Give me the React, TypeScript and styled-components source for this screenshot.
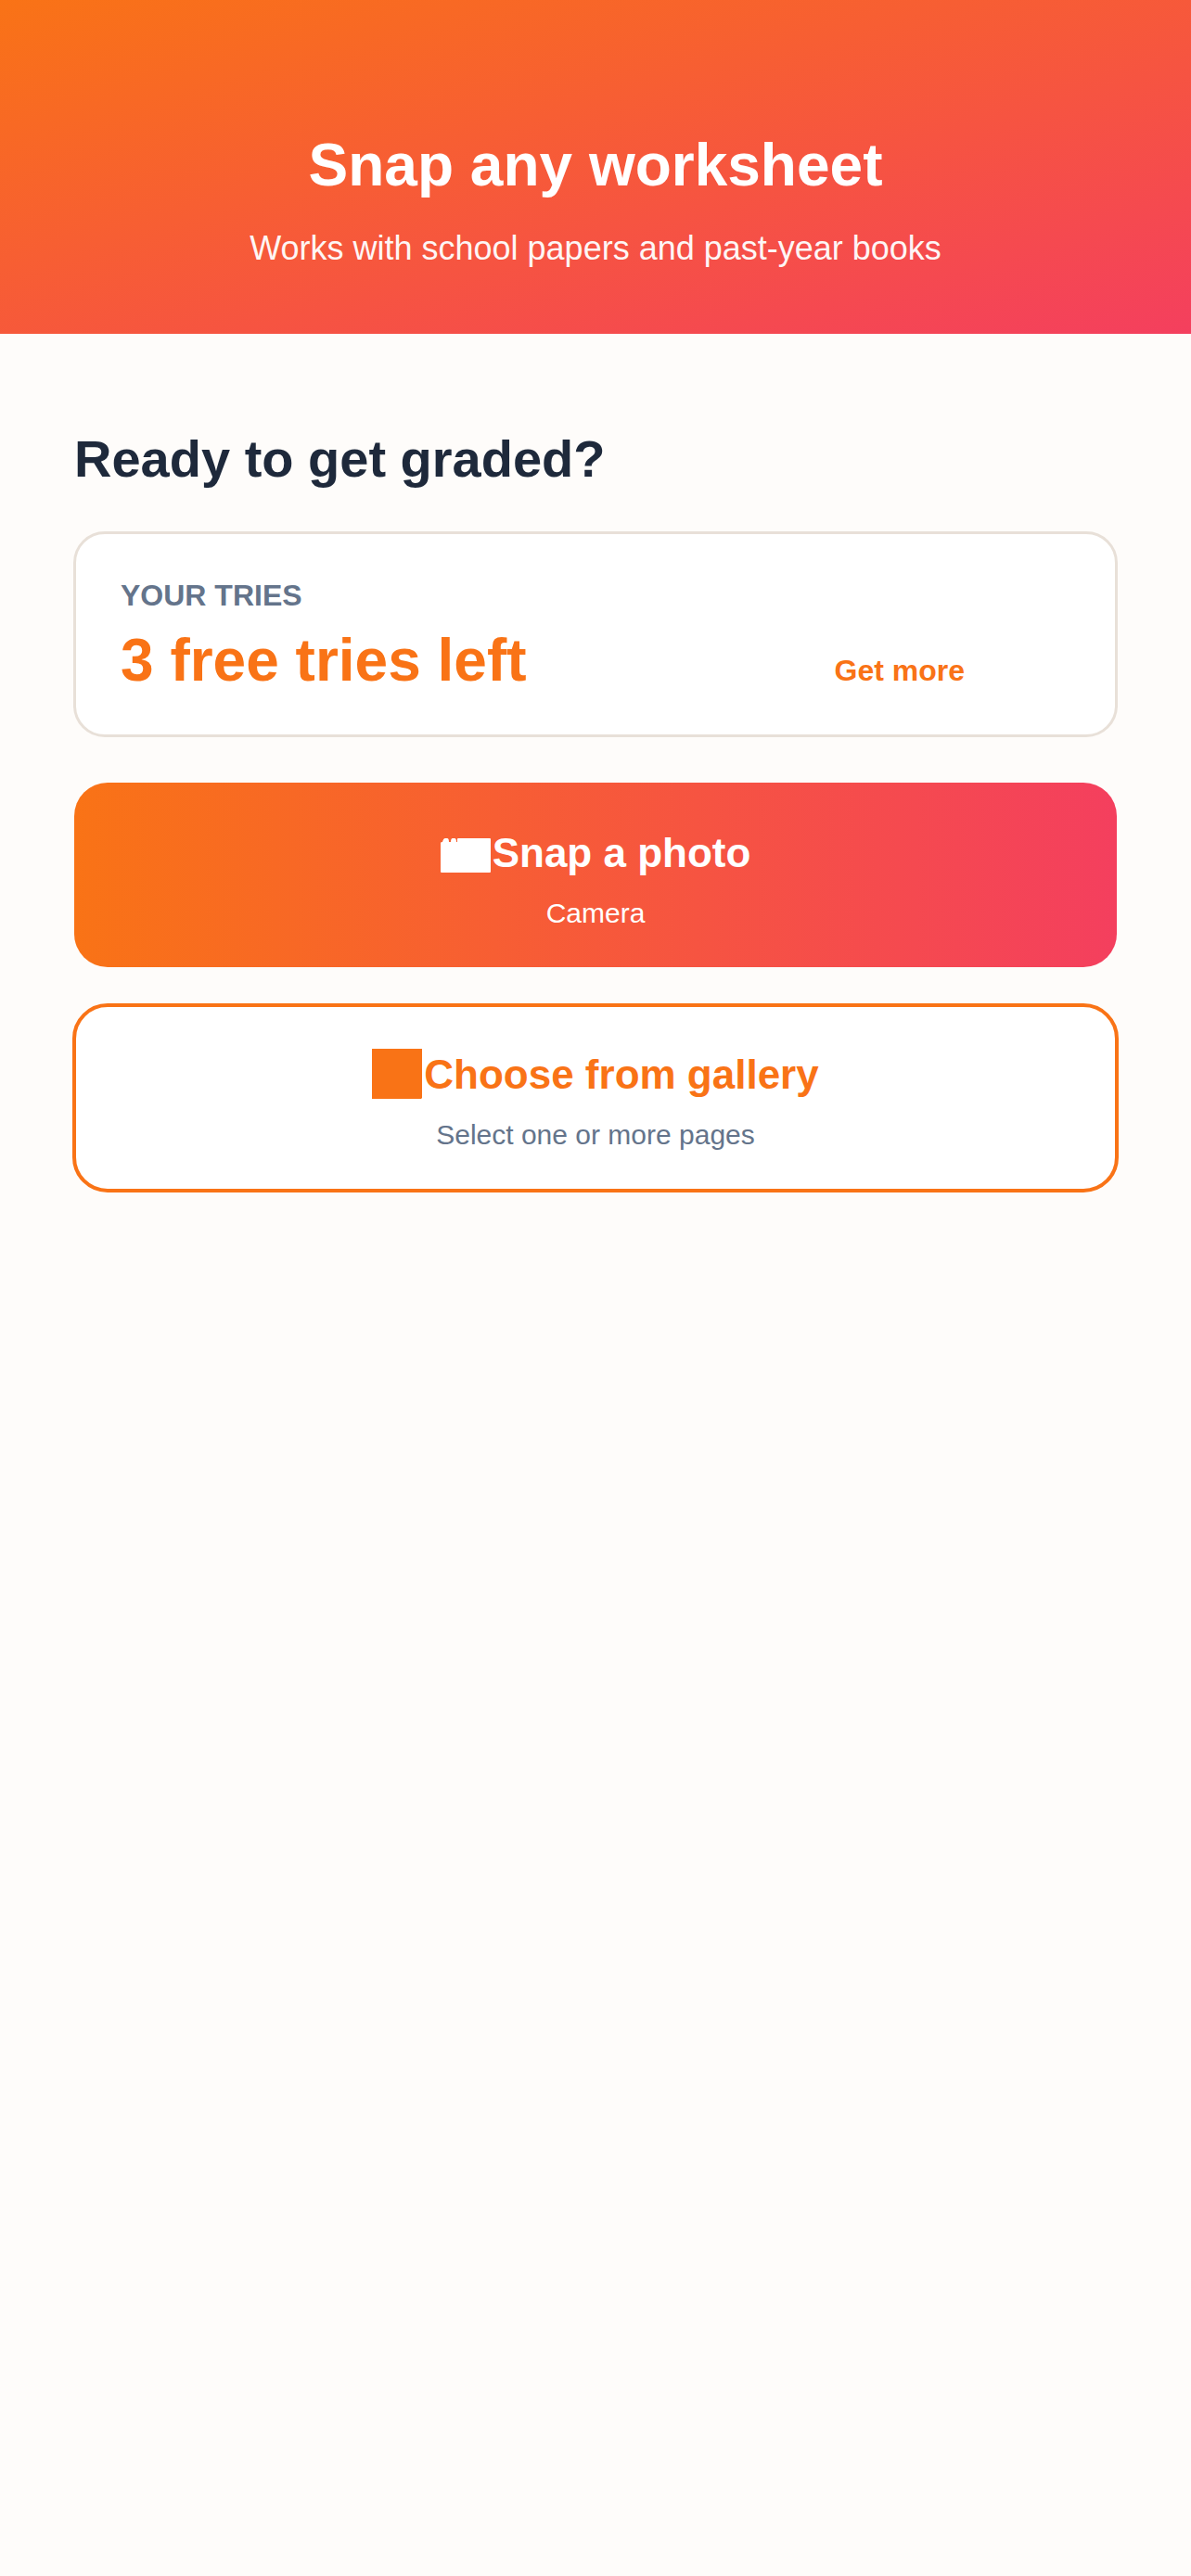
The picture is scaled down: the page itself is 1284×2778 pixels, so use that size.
import styled, { createGlobalStyle } from "styled-components";

const GlobalStyle = createGlobalStyle`
  * {
    box-sizing: border-box;
  }

  body {
    margin: 0;
    background: #fefcfa;
    font-family: "Liberation Sans", Arial, sans-serif;
  }
`;

const Page = styled.div`
  min-height: 2778px;
  background: #fefcfa;
`;

const Hero = styled.header`
  height: 360px;
  padding-top: 140px;
  text-align: center;
  color: #ffffff;
  background: linear-gradient(to bottom right, #f97316, #f43f5e);
`;

const HeroTitle = styled.h1`
  margin: 0;
  font-size: 64px;
  line-height: 76px;
  font-weight: 700;
`;

const HeroText = styled.p`
  margin: 25px 0 0;
  font-size: 36px;
  line-height: 54px;
  opacity: 0.95;
`;

const Main = styled.main`
  display: flex;
  flex-direction: column;
  padding: 95px 80px 0;
`;

const Heading = styled.h2`
  margin: 0 0 38px;
  font-size: 56px;
  line-height: 80px;
  font-weight: 700;
  color: #1e293b;
`;

const TriesCard = styled.section`
  display: flex;
  justify-content: space-between;
  align-items: flex-end;
  height: 222px;
  margin: 0 -1px;
  padding: 47px 162px 42px 48px;
  background: #ffffff;
  border: 3px solid #e8e0d8;
  border-radius: 34px;
`;

const TriesLabel = styled.div`
  font-size: 32px;
  line-height: 38px;
  font-weight: 700;
  color: #64748b;
`;

const TriesCount = styled.div`
  margin-top: 13px;
  font-size: 64px;
  line-height: 76px;
  font-weight: 700;
  color: #f97316;
`;

const MoreLink = styled.a`
  margin-bottom: 8px;
  font-size: 32px;
  line-height: 38px;
  font-weight: 700;
  color: #f97316;
`;

const ActionButton = styled.button<{ $primary?: boolean }>`
  display: flex;
  flex-direction: column;
  align-items: center;
  gap: 17px;
  font-family: inherit;
  height: ${(p) => (p.$primary ? "199px" : "204px")};
  margin: ${(p) => (p.$primary ? "49px 0 0" : "39px -2px 0")};
  padding: ${(p) => (p.$primary ? "49px" : "46px")} 0 0;
  border-radius: ${(p) => (p.$primary ? "36px" : "38px")};
  color: ${(p) => (p.$primary ? "#ffffff" : "#f97316")};
  border: ${(p) => (p.$primary ? "none" : "4px solid #f97316")};
  background: ${(p) =>
    p.$primary ? "linear-gradient(90deg, #f97316, #f43f5e)" : "#ffffff"};
`;

const ActionTitle = styled.span`
  display: flex;
  align-items: center;
  gap: 2px;
  font-size: 44px;
  line-height: 54px;
  font-weight: 700;
`;

const ActionText = styled.span<{ $primary?: boolean }>`
  font-size: 30px;
  line-height: 42px;
  color: ${(p) => (p.$primary ? "#ffffff" : "#64748b")};
`;

const CameraSvg = styled.svg`
  margin-top: 5px;
`;

const GallerySvg = styled.svg`
  margin-top: -2px;
`;

const CameraIcon = () => (
  <CameraSvg width="54" height="37" viewBox="0 0 54 37" fill="#ffffff">
    <path d="M1 37Q0 37 0 36V5Q0 4 2 4Q3 0 5 0H7Q9 0 9 4H11Q11 0 13 0H15Q17 0 17 4H18V1Q18 0 19 0H53Q54 0 54 1V36Q54 37 53 37Z" />
  </CameraSvg>
);

const GalleryIcon = () => (
  <GallerySvg width="54" height="54" viewBox="0 0 54 54" fill="#f97316">
    <path d="M0 0H54V53L53 54H0Z" />
  </GallerySvg>
);

const App = () => {
  return (
    <Page>
      <GlobalStyle />
      <Hero>
        <HeroTitle>Snap any worksheet</HeroTitle>
        <HeroText>Works with school papers and past-year books</HeroText>
      </Hero>
      <Main>
        <Heading>Ready to get graded?</Heading>
        <TriesCard>
          <div>
            <TriesLabel>YOUR TRIES</TriesLabel>
            <TriesCount>3 free tries left</TriesCount>
          </div>
          <MoreLink>Get more</MoreLink>
        </TriesCard>
        <ActionButton $primary>
          <ActionTitle>
            <CameraIcon />
            Snap a photo
          </ActionTitle>
          <ActionText $primary>Camera</ActionText>
        </ActionButton>
        <ActionButton>
          <ActionTitle>
            <GalleryIcon />
            Choose from gallery
          </ActionTitle>
          <ActionText>Select one or more pages</ActionText>
        </ActionButton>
      </Main>
    </Page>
  );
};

export default App;
